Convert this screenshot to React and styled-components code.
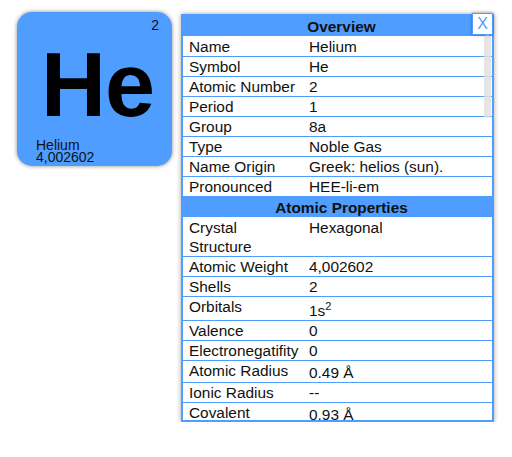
import React from "react";
import styled, { createGlobalStyle } from "styled-components";

const GlobalStyle = createGlobalStyle`
  html, body {
    margin: 0;
    padding: 0;
    background: #ffffff;
  }
  body {
    font-family: "Liberation Sans", Arial, sans-serif;
    color: #111;
  }
`;

const BLUE = "#4f9dff";

const overview = [
  ["Name", "Helium"],
  ["Symbol", "He"],
  ["Atomic Number", "2"],
  ["Period", "1"],
  ["Group", "8a"],
  ["Type", "Noble Gas"],
  ["Name Origin", "Greek: helios (sun)."],
  ["Pronounced", "HEE-li-em"],
];

const atomic = [
  ["Crystal Structure", "Hexagonal"],
  ["Atomic Weight", "4,002602"],
  ["Shells", "2"],
  [
    "Orbitals",
    <>
      1s<sup>2</sup>
    </>,
    4,
  ],
  ["Valence", "0"],
  ["Electronegatifity", "0"],
  ["Atomic Radius", "0.49 Å", 2],
  ["Ionic Radius", "--"],
  ["Covalent Radius", "0.93 Å", 2],
];

const App = () => {
  return (
    <>
      <GlobalStyle />
      <Page>
        <Tile>
          <Number>2</Number>
          <Symbol>He</Symbol>
          <TileInfo>
            <span>Helium</span>
            <span>4,002602</span>
          </TileInfo>
        </Tile>

        <PanelWrap>
          <Panel>
            <Table>
              <colgroup>
                <LabelCol />
                <col />
              </colgroup>
              <tbody>
                <tr>
                  <Heading colSpan={2}>Overview</Heading>
                </tr>
                {overview.map(([label, value]) => (
                  <Row key={label}>
                    <Label>{label}</Label>
                    <Value>{value}</Value>
                  </Row>
                ))}
                <tr>
                  <Heading colSpan={2}>Atomic Properties</Heading>
                </tr>
                {atomic.map(([label, value, drop = 0]) => (
                  <Row key={label}>
                    <Label>{label}</Label>
                    <Value $drop={drop}>{value}</Value>
                  </Row>
                ))}
              </tbody>
            </Table>
            <Thumb />
          </Panel>
          <CloseButton>X</CloseButton>
        </PanelWrap>
      </Page>
    </>
  );
};

export default App;

const Page = styled.div`
  display: flex;
  align-items: flex-start;
  gap: 9px;
  padding: 12px 0 0 17px;
`;

const Tile = styled.div`
  width: 155px;
  height: 154px;
  box-sizing: border-box;
  background-color: ${BLUE};
  border-radius: 15px;
  box-shadow: 0 0 4px rgba(0, 0, 0, 0.45);
  display: flex;
  flex-direction: column;
  padding: 5px 13px 3px 19px;
`;

const Number = styled.div`
  align-self: flex-end;
  font-size: 14px;
  line-height: 16px;
  color: #111;
`;

const Symbol = styled.div`
  font-size: 90px;
  font-weight: bold;
  line-height: 70px;
  margin: 17px 0 0 5px;
  color: #000;
  letter-spacing: -1px;
`;

const TileInfo = styled.div`
  margin-top: auto;
  display: flex;
  flex-direction: column;
  font-size: 14px;
  line-height: 12px;
  color: #111;
`;

const PanelWrap = styled.div`
  position: relative;
  margin-top: 2px;
`;

const Panel = styled.div`
  position: relative;
  width: 313px;
  height: 408px;
  box-sizing: border-box;
  border: 2px solid ${BLUE};
  overflow: hidden;
  box-shadow: 0 0 5px rgba(0, 0, 0, 0.35);
  background: #fff;
`;

const Table = styled.table`
  width: 100%;
  table-layout: fixed;
  border-collapse: collapse;
  font-size: 15.4px;
  line-height: 19px;
  color: #111;
`;

const LabelCol = styled.col`
  width: 126px;
`;

const Heading = styled.th`
  background-color: ${BLUE};
  font-weight: bold;
  text-align: center;
  padding: 1px 0 0 8px;
  border-bottom: 1px solid #fff;
  color: #111;
`;

const Row = styled.tr`
  border-bottom: 1px solid ${BLUE};
`;

const Label = styled.td`
  padding: 0 8px 0 6px;
  vertical-align: top;
`;

const Value = styled.td`
  padding: ${(p) => p.$drop || 0}px 6px 0 0;
  vertical-align: top;

  sup {
    font-size: 11px;
    line-height: 0;
    vertical-align: 6px;
  }
`;

const Thumb = styled.div`
  position: absolute;
  top: 19px;
  right: 1px;
  width: 7px;
  height: 83px;
  border-radius: 4px;
  background: rgba(225, 225, 225, 0.85);
`;

const CloseButton = styled.button`
  position: absolute;
  top: -1px;
  right: 1px;
  width: 21px;
  height: 22px;
  padding: 0;
  background: #fff;
  border: 1px solid ${BLUE};
  color: ${BLUE};
  font-family: "Liberation Sans", Arial, sans-serif;
  font-size: 16px;
  line-height: 20px;
  box-shadow: 0 0 3px rgba(0, 0, 0, 0.35);
  cursor: pointer;
`;
